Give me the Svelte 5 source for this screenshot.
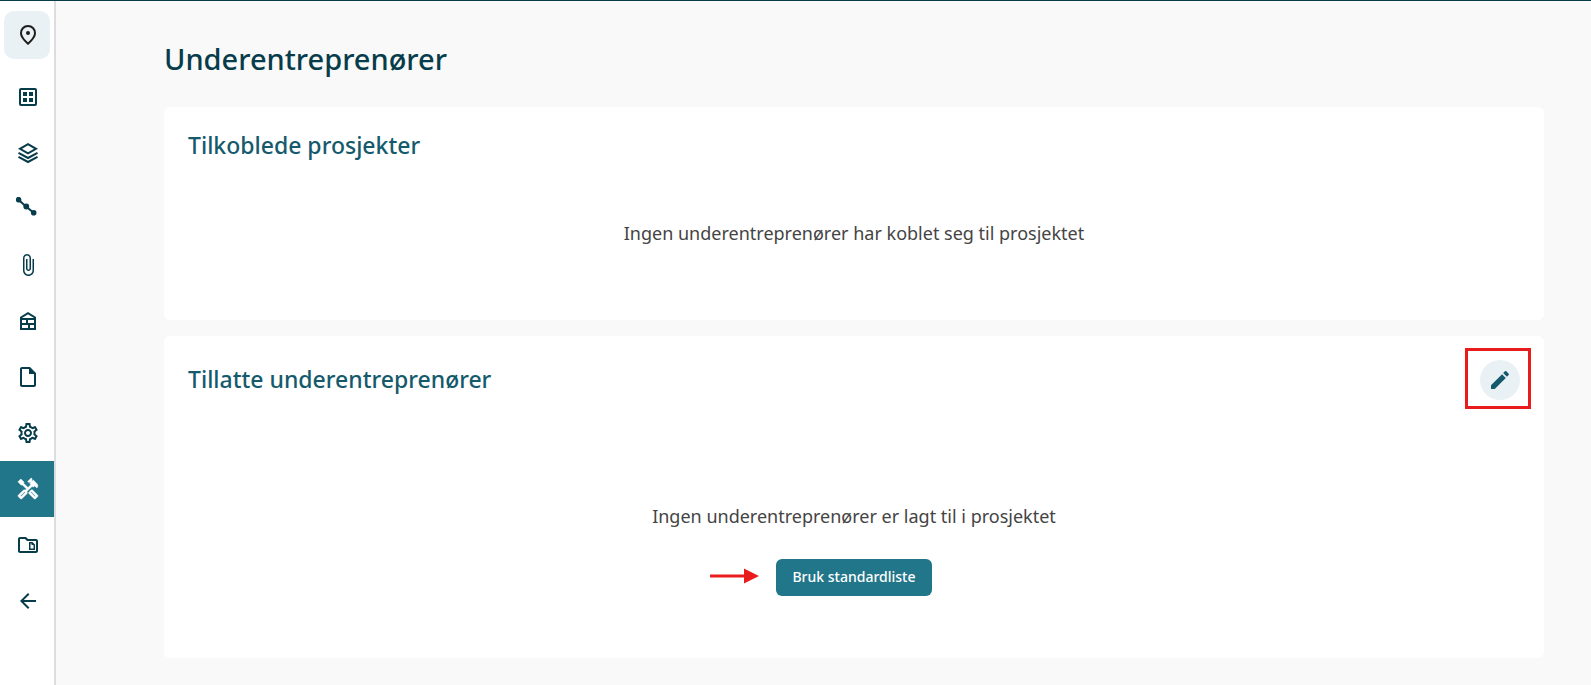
<script>
    const items = [
        { id: 'map', label: 'Kart' },
        { id: 'grid', label: 'Oversikt' },
        { id: 'layers', label: 'Kartlag' },
        { id: 'line', label: 'Linjer' },
        { id: 'clip', label: 'Vedlegg' },
        { id: 'house', label: 'Bygg' },
        { id: 'file', label: 'Dokumenter' },
        { id: 'gear', label: 'Innstillinger' },
        { id: 'tools', label: 'Underentreprenører' },
        { id: 'folder', label: 'Mapper' },
        { id: 'back', label: 'Tilbake' }
    ];

    let active = $state('tools');
</script>

<div class="app">
    <nav class="sidebar">
        {#each items as item (item.id)}
            <button
                class="item"
                class:project={item.id === 'map'}
                class:active={item.id === active}
                type="button"
                aria-label={item.label}
                onclick={() => (active = item.id)}
            >
                <svg viewBox="0 0 24 24" aria-hidden="true">
                    {#if item.id === 'map'}
                        <path class="stroke" d="M12 20.7C7 16.2 5 13 5 10.2 5 6 8.1 3 12 3s7 3 7 7.2c0 2.8-2 6-7 10.5z" />
                        <circle cx="12" cy="10" r="2" />
                    {:else if item.id === 'grid'}
                        <rect class="stroke" x="4" y="4" width="16" height="16" rx="1" />
                        <path d="M7 7h4v4H7zM13 7h4v4h-4zM7 13h4v4H7zM13 13h4v4h-4z" />
                    {:else if item.id === 'layers'}
                        <path class="stroke" d="M12 3.2 20 7.8 12 12.4 4 7.8zM2.500 11.800 12 17 21.500 11.800M2.500 15.800 12 21 21.500 15.800" />
                    {:else if item.id === 'line'}
                        <path class="stroke" d="M2.5 2.7 10.3 9.7 17.7 15.7" />
                        <circle cx="2.6" cy="2.7" r="2.8" />
                        <circle cx="10.3" cy="9.5" r="2.9" />
                        <circle cx="17.7" cy="15.7" r="2.8" />
                    {:else if item.id === 'clip'}
                        <path d="M16.5 6v11.5c0 2.21-1.79 4-4 4s-4-1.79-4-4V5c0-1.38 1.12-2.5 2.5-2.5s2.5 1.12 2.5 2.5v10.5c0 .55-.45 1-1 1s-1-.45-1-1V6H10v9.5c0 1.38 1.12 2.5 2.5 2.5s2.5-1.12 2.5-2.5V5c0-2.21-1.79-4-4-4S7 2.79 7 5v12.5c0 3.04 2.46 5.5 5.5 5.5s5.5-2.46 5.5-5.5V6h-1.5z" />
                    {:else if item.id === 'house'}
                        <path class="stroke" d="M5 20V8.500L12 4.200l7 4.300V20zM5 10h14M5 15h14M11 10v5M13 15v5" />
                    {:else if item.id === 'file'}
                        <path fill-rule="evenodd" d="M6 2h8l6 6v12c0 1.1-.9 2-2 2H6c-1.1 0-2-.9-2-2V4c0-1.1.9-2 2-2zm0 2v16h12V9h-5V4z" />
                    {:else if item.id === 'gear'}
                        <path d="M19.43 12.98c.04-.32.07-.64.07-.98 0-.34-.03-.66-.07-.98l2.11-1.65c.19-.15.24-.42.12-.64l-2-3.46c-.09-.16-.26-.25-.44-.25-.06 0-.12.01-.17.03l-2.49 1c-.52-.4-1.08-.73-1.69-.98l-.38-2.65C14.46 2.18 14.25 2 14 2h-4c-.25 0-.46.18-.49.42l-.38 2.65c-.61.25-1.17.59-1.69.98l-2.49-1c-.06-.02-.12-.03-.18-.03-.17 0-.34.09-.43.25l-2 3.46c-.13.22-.07.49.12.64l2.11 1.65c-.04.32-.07.65-.07.98 0 .33.03.66.07.98l-2.11 1.65c-.19.15-.24.42-.12.64l2 3.46c.09.16.26.25.44.25.06 0 .12-.01.17-.03l2.49-1c.52.4 1.08.73 1.69.98l.38 2.65c.03.24.24.42.49.42h4c.25 0 .46-.18.49-.42l.38-2.65c.61-.25 1.17-.59 1.69-.98l2.49 1c.06.02.12.03.18.03.17 0 .34-.09.43-.25l2-3.46c.12-.22.07-.49-.12-.64l-2.11-1.65zm-1.98-1.71c.04.31.05.52.05.73 0 .21-.02.43-.05.73l-.14 1.13.89.7 1.08.84-.7 1.21-1.27-.51-1.04-.42-.9.68c-.43.32-.84.56-1.25.73l-1.06.43-.16 1.13-.2 1.35h-1.4l-.19-1.35-.16-1.13-1.06-.43c-.43-.18-.83-.41-1.23-.71l-.91-.7-1.06.43-1.27.51-.7-1.21 1.08-.84.89-.7-.14-1.13c-.03-.31-.05-.54-.05-.74s.02-.43.05-.73l.14-1.13-.89-.7-1.08-.84.7-1.21 1.27.51 1.04.42.9-.68c.43-.32.84-.56 1.25-.73l1.06-.43.16-1.13.2-1.35h1.39l.19 1.35.16 1.13 1.06.43c.43.18.83.41 1.23.71l.91.7 1.06-.43 1.27-.51.7 1.21-1.07.85-.89.7.14 1.13zM12 8c-2.21 0-4 1.79-4 4s1.79 4 4 4 4-1.79 4-4-1.79-4-4-4zm0 6c-1.1 0-2-.9-2-2s.9-2 2-2 2 .9 2 2-.9 2-2 2z" />
                    {:else if item.id === 'tools'}
                        <path class="bold" d="M21.67 18.17l-5.3-5.3h-.99l-2.54 2.54v.99l5.3 5.3c.39.39 1.02.39 1.41 0l2.12-2.12c.39-.38.39-1.02 0-1.41zm-2.83 1.42l-4.24-4.24.71-.71 4.24 4.24-.71.71z" />
                        <path class="bold" d="M17.34 10.19l1.41-1.41 2.12 2.12c1.17-1.17 1.17-3.07 0-4.24l-3.54-3.54-1.41 1.41V1.71L15.22 1l-3.54 3.54.71.71h2.83l-1.41 1.41 1.06 1.06-2.89 2.89-4.13-4.13V5.06L4.83 2.04 2 4.87 5.03 7.9h1.41l4.13 4.13-.85.85H7.6l-5.3 5.3c-.39.39-.39 1.02 0 1.41l2.12 2.12c.39.39 1.02.39 1.41 0l5.3-5.3v-2.12l5.15-5.15 1.06 1.05zm-7.98 5.15l-4.24 4.24-.71-.71 4.24-4.24.71.71z" />
                    {:else if item.id === 'folder'}
                        <path fill-rule="evenodd" d="M4 4h6l2 2h8c1.1 0 2 .9 2 2v10c0 1.1-.9 2-2 2H4c-1.1 0-2-.9-2-2V6c0-1.1.9-2 2-2zm0 2v12h16V8h-9L9 6z" />
                        <path fill-rule="evenodd" d="M13 9h3.500l2.500 2.500V17h-6zm1.500 1.500v5h3V12h-2v-1.500z" />
                    {:else}
                        <path d="M20 11H7.83l5.59-5.59L12 4l-8 8 8 8 1.41-1.41L7.83 13H20v-2z" />
                    {/if}
                </svg>
            </button>
        {/each}
    </nav>

    <main>
        <h1>Underentreprenører</h1>

        <section class="card">
            <header>
                <h2>Tilkoblede prosjekter</h2>
            </header>
            <div class="empty">
                <p>Ingen underentreprenører har koblet seg til prosjektet</p>
            </div>
        </section>

        <section class="card">
            <header class="editable">
                <h2>Tillatte underentreprenører</h2>
                <div class="highlight">
                    <button class="edit" type="button" aria-label="Rediger">
                        <svg viewBox="0 0 24 24" aria-hidden="true">
                            <path d="M3 17.25V21h3.75L17.81 9.94l-3.75-3.75L3 17.25zM20.71 7.04c.39-.39.39-1.02 0-1.41l-2.34-2.34c-.39-.39-1.02-.39-1.41 0l-1.83 1.83 3.75 3.75 1.83-1.83z" />
                        </svg>
                    </button>
                </div>
            </header>
            <div class="empty tall">
                <p>Ingen underentreprenører er lagt til i prosjektet</p>
                <div class="action">
                    <svg class="arrow" viewBox="0 0 50 16" aria-hidden="true">
                        <path d="M0 6.5h34V.5L49 8l-15 7.500v-6H0z" />
                    </svg>
                    <button class="primary" type="button">Bruk standardliste</button>
                </div>
            </div>
        </section>
    </main>
</div>

<style>
    :global(body) {
        background: #f9f9f9;
    }

    .app {
        display: flex;
        box-sizing: border-box;
        min-height: 100vh;
        border-top: 1px solid #073c4b;
        font-family: "Noto Sans", "Open Sans", sans-serif;
        color: #444;
    }

    .sidebar {
        display: flex;
        flex: none;
        flex-direction: column;
        width: 54px;
        padding-top: 10px;
        border-right: 2px solid #ddd;
        background: #fff;
    }

    .item {
        display: flex;
        align-items: center;
        justify-content: center;
        height: 56px;
        padding: 0 0 0 2px;
        border: none;
        background: none;
        color: #073c4b;
        cursor: pointer;
    }

    .item svg {
        width: 24px;
        height: 24px;
        fill: currentColor;
    }

    .item .stroke {
        fill: none;
        stroke: currentColor;
        stroke-width: 2;
    }

    .item .bold {
        stroke: currentColor;
        stroke-width: 0.6;
    }

    .project {
        height: 48px;
        margin: 0 4px 10px;
        border-radius: 10px;
        background: #e9f1f5;
        color: #1d1d1b;
    }

    .active {
        background: #22768a;
        color: #fff;
    }

    main {
        flex: 1;
        padding: 34px 47px 26px 108px;
    }

    h1,
    h2,
    p {
        margin: 0;
    }

    h1 {
        margin-bottom: 24px;
        font-size: 29px;
        font-weight: 500;
        line-height: 48px;
        color: #073c4b;
    }

    h2 {
        font-size: 23px;
        font-weight: 500;
        line-height: 32px;
        color: #155a6c;
    }

    .card {
        padding: 22px 24px 24px;
        border-radius: 6px;
        background: #fff;
    }

    .card + .card {
        margin-top: 16px;
    }

    header {
        display: flex;
        align-items: center;
        justify-content: space-between;
    }

    .editable {
        margin: -10px -11px 0 0;
    }

    .empty {
        display: flex;
        flex-direction: column;
        align-items: center;
        padding: 61px 0 51px;
    }

    .empty p {
        font-size: 18px;
        line-height: 23px;
    }

    .tall {
        padding: 96px 0 38px;
    }

    .highlight {
        box-sizing: border-box;
        display: flex;
        align-items: center;
        justify-content: center;
        width: 66px;
        height: 61px;
        padding: 2px 0 0 4px;
        border: 3px solid #e81c1c;
    }

    .edit {
        display: flex;
        align-items: center;
        justify-content: center;
        width: 40px;
        height: 40px;
        padding: 0;
        border: none;
        border-radius: 50%;
        background: #e9f1f5;
        cursor: pointer;
    }

    .edit svg {
        width: 24px;
        height: 24px;
        fill: #155a6c;
    }

    .action {
        position: relative;
        margin-top: 31px;
    }

    /* pointer drawn beside the button, it must not push it off centre */
    .arrow {
        position: absolute;
        top: 9px;
        right: calc(100% + 16px);
        width: 50px;
        height: 16px;
        fill: #e81c1c;
    }

    .primary {
        height: 37px;
        padding: 0 16px 2px;
        border: none;
        border-radius: 6px;
        background: #22768a;
        color: #fff;
        font-family: inherit;
        font-size: 14px;
        font-weight: 500;
        cursor: pointer;
    }
</style>
